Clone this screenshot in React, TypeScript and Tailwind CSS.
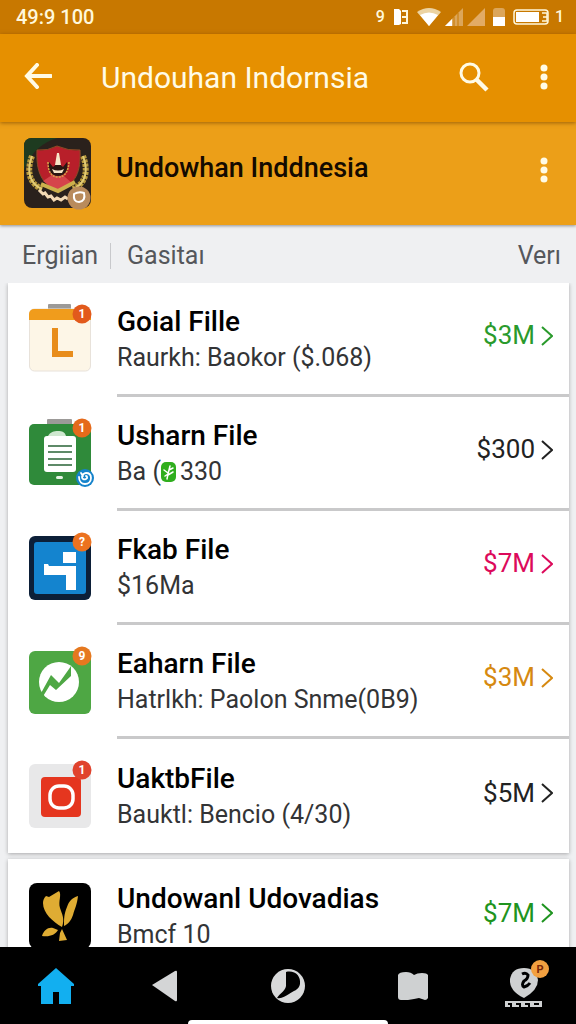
import React from 'react';

interface FileItem {
  title: string;
  detail: React.ReactNode;
  amount: string;
  color: string;
  icon: React.ReactNode;
}

const CountBadge = ({ label, fill }: { label: string; fill: string }) => (
  <>
    <circle cx="53" cy="6" r="9.5" fill={fill} />
    <text x="53" y="10" fontSize="12" fontWeight="700" textAnchor="middle" fill="#fff">{label}</text>
  </>
);

const NotesIcon = () => (
  <svg viewBox="0 0 62 64" className="h-16 w-16 overflow-visible">
    <rect x="19" y="-4" width="23" height="8" rx="1" fill="#9c9a98" />
    <rect x="0.5" y="1" width="61" height="62" rx="5" fill="#fdf6e7" stroke="#e8e2da" />
    <path d="M0 12V6a5 5 0 0 1 5-5h52a5 5 0 0 1 5 5v6z" fill="#f09c1c" />
    <path d="M23 20h6v23h15v6H23z" fill="#e88d1c" />
    <CountBadge label="1" fill="#e25a1c" />
  </svg>
);

const ClipboardIcon = () => (
  <svg viewBox="0 0 62 64" className="h-16 w-16 overflow-visible">
    <rect x="18" y="-3" width="25" height="8" rx="1" fill="#9c9a98" />
    <rect y="2" width="62" height="61" rx="5" fill="#2f8a3a" />
    <path d="M19 14c2-4 6-5 10-5s7 1 8 5z" fill="#cfe8d0" />
    <rect x="15" y="14" width="32" height="36" rx="3" fill="#fff" />
    <path d="M19 24h24M19 30h24M19 37h24M19 43h24" stroke="#5e8a68" strokeWidth="2" />
    <rect x="27" y="54" width="7" height="3" rx="1.5" fill="#e5f3e5" />
    <circle cx="56" cy="56" r="9" fill="#1583cb" />
    <path d="M52 51l2 3m-4 1c0 5 3 7 6 7s6-2 6-6-3-5-5-5-4 2-4 4 2 3 4 2 1-3 0-3" fill="none" stroke="#fff" strokeWidth="1.8" strokeLinecap="round" />
    <CountBadge label="1" fill="#e56a1b" />
  </svg>
);

const BlocksIcon = () => (
  <svg viewBox="0 0 62 64" className="h-16 w-16 overflow-visible">
    <rect width="62" height="64" rx="6" fill="#0c1f38" />
    <rect x="5" y="6" width="52" height="52" rx="3" fill="#1484cf" />
    <path d="M34 16h13v11H34zM15 28h4l1 2h27v24H37V39H15z" fill="#fff" />
    <CountBadge label="?" fill="#ec7220" />
  </svg>
);

const TrendIcon = () => (
  <svg viewBox="0 0 62 64" className="h-16 w-16 overflow-visible">
    <rect y="1" width="62" height="63" rx="6" fill="#4ea744" />
    <circle cx="30" cy="32" r="20" fill="#fff" />
    <path d="M11 45l11-20 8 8 10-14 2-3v10L27 40l-6-5-8 13z" fill="#4ea744" />
    <CountBadge label="9" fill="#e5781f" />
  </svg>
);

const RecordIcon = () => (
  <svg viewBox="0 0 62 64" className="h-16 w-16 overflow-visible">
    <rect width="62" height="64" rx="6" fill="#e8e8e9" />
    <rect x="12" y="13" width="40" height="40" rx="4" fill="#e5361f" />
    <rect x="21" y="22" width="23" height="22" rx="9" fill="none" stroke="#fff" strokeWidth="3.5" />
    <CountBadge label="1" fill="#e0432d" />
  </svg>
);

const WingsIcon = () => (
  <svg viewBox="0 0 62 66" className="h-[66px] w-16">
    <rect width="62" height="66" rx="8" fill="#000" />
    <g fill="#dfac33">
      <path d="M30 8c3 4-1 10 1 17 2 6 5 11 2 19C24 39 14 30 14 20c0-3 1-5 3-7l3 1z" />
      <path d="M49 13c-1 9-3 12-5 19-2 6-5 9-9 11 0-7 0-12 3-19 2-6 5-9 11-11z" />
      <path d="M13 53c2-6 6-9 11-8l5 2c-3 5-8 7-16 6zM33 46l5 11-8 1 1-8z" />
    </g>
  </svg>
);

const CrestIcon = () => (
  <svg viewBox="0 0 67 70" className="h-[70px] w-[67px] overflow-visible">
    <rect width="67" height="70" rx="8" fill="#2a211c" />
    <path d="M0 32V8q0-8 8-8h26Q10 6 0 32z" fill="#1e3b20" />
    <path d="M8 18C2 34 6 46 18 51M59 18c6 16 2 28-10 33" fill="none" stroke="#b99a3c" strokeWidth="6" strokeDasharray="3 1" />
    <path d="M8 18C2 34 6 46 18 51M59 18c6 16 2 28-10 33" fill="none" stroke="#e2cb74" strokeWidth="2" />
    <path d="M13 12q11 1 20-4 11 5 23 4c1 22-4 34-22 41C17 46 12 33 13 12z" fill="#b81f2a" stroke="#8d4a25" />
    <path d="M19 43l15-10 14 12-14 9z" fill="#d5444b" />
    <path d="M17 46l17 7 17-9" fill="none" stroke="#cdb04c" strokeWidth="4" />
    <path d="M25 24c-2 7 2 14 9 14s11-7 9-14l-4 5-5-4-5 4z" fill="#2a1712" />
    <path d="M33 15h2l2 12h-6zM28 31q6 3 12 0l-2 4h-8z" fill="#f7e6c8" />
    <path d="M24 24q0 15 10 15t11-15" fill="none" stroke="#d7a94a" strokeWidth="1.5" strokeDasharray="2 1" />
    <path d="M15 52l4 4 2-1 3 4 3-1 3 4 3-2 4 2 4-3 3 2" fill="none" stroke="#f3d9b4" strokeWidth="3" />
    <circle cx="55" cy="60" r="11.5" fill="#b98b5c" />
    <path d="M50 56q5-3 10-1 2 8-5 9-6 0-5-8z" fill="none" stroke="#fff" strokeWidth="2" strokeLinejoin="round" />
  </svg>
);

const LeafTag = () => (
  <svg viewBox="0 0 15 20" className="mr-1 inline-block h-5 w-[15px] align-[-2px]">
    <rect width="15" height="20" rx="5" fill="#2fae1e" />
    <path d="M6 17l1-5 2-8M7 11L3 8M7 13l5-3M4 14l3-2M8 8l4-2" stroke="#fff" strokeWidth="1.5" strokeLinecap="round" />
  </svg>
);

const MoreIcon = () => (
  <svg viewBox="0 0 8 26" className="h-[26px] w-2" fill="#fffbe6">
    <circle cx="4" cy="4" r="3.5" />
    <circle cx="4" cy="13" r="3.5" />
    <circle cx="4" cy="22" r="3.5" />
  </svg>
);

const files: FileItem[] = [
  { title: 'Goial Fille', detail: 'Raurkh: Baokor ($.068)', amount: '$3M', color: 'text-[#2a9a2c]', icon: <NotesIcon /> },
  { title: 'Usharn File', detail: <>Ba (<LeafTag />330</>, amount: '$300', color: 'text-[#222]', icon: <ClipboardIcon /> },
  { title: 'Fkab File', detail: '$16Ma', amount: '$7M', color: 'text-[#dc0a5b]', icon: <BlocksIcon /> },
  { title: 'Eaharn File', detail: 'Hatrlkh: Paolon Snme(0B9)', amount: '$3M', color: 'text-[#d68910]', icon: <TrendIcon /> },
  { title: 'UaktbFile', detail: 'Bauktl: Bencio (4/30)', amount: '$5M', color: 'text-[#222]', icon: <RecordIcon /> },
];

const moreFiles: FileItem[] = [
  { title: 'Undowanl Udovadias', detail: 'Bmcf 10', amount: '$7M', color: 'text-[#1f9420]', icon: <WingsIcon /> },
];

const FileCard = ({ items }: { items: FileItem[] }) => (
  <ul className="bg-white shadow-[0_1px_4px_rgba(0,0,0,0.3)]">
    {items.map((item, index) => (
      <li key={item.title} className="flex h-[114px] items-center pl-5">
        <div className="w-[89px] shrink-0">{item.icon}</div>
        <div
          className={`flex h-full min-w-0 flex-1 items-center justify-between ${
            index < items.length - 1 ? 'border-b-3 border-[#c9c9ca]' : ''
          }`}
        >
          <div className="whitespace-nowrap pt-0.5">
            <h2 className="text-[28px] font-medium leading-9 text-black">{item.title}</h2>
            <p className="text-[25px] leading-9 text-[#333436]">{item.detail}</p>
          </div>
          <a href="#" className={`flex items-center gap-1.5 pr-4 pb-1.5 text-[26px] ${item.color}`}>
            {item.amount}
            <svg viewBox="0 0 12 22" className="h-[22px] w-3" fill="none" stroke="currentColor" strokeWidth="2">
              <path d="M1 2l10 9-10 9" />
            </svg>
          </a>
        </div>
      </li>
    ))}
  </ul>
);

export default function App() {
  return (
    <div className="flex h-screen flex-col overflow-hidden bg-[#eff0f2] font-['Roboto',sans-serif]">
      {/* Status bar */}
      <div className="flex h-[34px] shrink-0 items-center justify-between bg-[#c87800] pl-4 pr-3 text-[20px] font-medium text-[#fff8dc]">
        <span>49:9 100</span>
        <div className="flex items-center gap-1">
          <span className="text-[16px]">9</span>
          <svg viewBox="0 0 16 18" className="mx-1 h-[18px] w-4">
            <path d="M1 1h5l2 2v13l-2 1H1z" fill="#fff" />
            <path d="M9 3h5v12H9M9 9h4" fill="none" stroke="#fff8dc" strokeWidth="2" />
          </svg>
          <svg viewBox="0 0 24 18" className="h-[18px] w-6">
            <path d="M0 4q12-8 24 0L12 18z" fill="#ecd3a2" />
            <path d="M3 7q9-5 18 0l-9 11z" fill="#fff" />
          </svg>
          <svg viewBox="0 0 18 18" className="h-[18px] w-[18px]">
            <path d="M0 18L18 0v18z" fill="#dca65a" />
            <path d="M0 18l7-7v7z" fill="#fff" />
            <path d="M9 9v9M13 5v13" stroke="#c87800" />
          </svg>
          <svg viewBox="0 0 18 18" className="h-[18px] w-[18px]">
            <path d="M0 18L18 0v18z" fill="#e2ab66" />
          </svg>
          <svg viewBox="0 0 12 20" className="mx-1 h-5 w-3">
            <path d="M0 4q0-3 3-3h6q3 0 3 3v6H0z" fill="#dca65a" />
            <path d="M0 10h12v9H0z" fill="#fff" />
          </svg>
          <svg viewBox="0 0 38 16" className="h-4 w-[38px]">
            <rect x="1" y="1" width="34" height="14" rx="3" fill="none" stroke="#fff8dc" strokeWidth="1.5" />
            <rect x="3" y="3" width="23" height="10" fill="#fff" />
            <path d="M29 4h5v8h-5M30 8h4" fill="none" stroke="#fff8dc" strokeWidth="1.5" />
          </svg>
          <span className="text-[16px]">1</span>
        </div>
      </div>

      {/* Toolbar */}
      <header className="relative flex h-[88px] shrink-0 items-center bg-[#e69000] pl-6 pr-7 text-[#fffbe6] shadow-[0_1px_4px_rgba(120,70,0,0.7)]">
        <button aria-label="Back" className="w-[77px] shrink-0 pb-1">
          <svg viewBox="0 0 28 26" className="h-[26px] w-7" fill="none" stroke="currentColor" strokeWidth="4">
            <path d="M27 13H3M13 2L3 13l10 11" strokeLinecap="round" />
          </svg>
        </button>
        <h1 className="flex-1 whitespace-nowrap pb-0.5 text-[30px]">Undouhan Indornsia</h1>
        <button aria-label="Search" className="mr-[51px] pb-0.5">
          <svg viewBox="0 0 30 30" className="h-[30px] w-[30px]" fill="none" stroke="currentColor">
            <circle cx="11" cy="11" r="9" strokeWidth="3" />
            <path d="M17 17l11 11" strokeWidth="4.5" />
          </svg>
        </button>
        <button aria-label="More options" className="pb-0.5"><MoreIcon /></button>
      </header>

      {/* Account */}
      <section className="flex h-[103px] shrink-0 items-center bg-[#ec9f18] pl-6 pr-7 shadow-[0_1px_3px_rgba(0,0,0,0.4)]">
        <div className="w-[92px] shrink-0 pb-0.5"><CrestIcon /></div>
        <h2 className="flex-1 whitespace-nowrap pb-2.5 text-[27px] font-medium text-[#140a00]">Undowhan Inddnesia</h2>
        <button aria-label="Account options" className="pb-2"><MoreIcon /></button>
      </section>

      {/* Filters */}
      <nav className="flex h-[58px] shrink-0 items-center pl-[22px] pt-1 pr-[15px] text-[25px] text-[#55575b]">
        <a href="#">Ergiian</a>
        <span className="ml-3 mr-4 h-[26px] w-px bg-[#c8c9cc]" />
        <a href="#" className="flex-1">Gasitaı</a>
        <a href="#">Verı</a>
      </nav>

      <main className="flex min-h-0 flex-1 flex-col gap-[6px] overflow-hidden pl-2 pr-[7px]">
        <FileCard items={files} />
        <FileCard items={moreFiles} />
      </main>

      {/* Bottom navigation */}
      <footer className="relative flex h-[77px] shrink-0 items-center justify-between bg-black pl-[38px] pr-[27px]">
        <button aria-label="Home">
          <svg viewBox="0 0 36 36" className="h-9 w-9">
            <path d="M18 0l18 16v2h-3v18H21V24h-6v12H3V18H0v-2z" fill="#12aff0" />
          </svg>
        </button>
        <button aria-label="Back" className="pr-4">
          <svg viewBox="0 0 26 32" className="h-8 w-[26px]">
            <path d="M1 15L24 1q2-1 2 1v28q0 2-2 1z" fill="#d4d5d6" />
          </svg>
        </button>
        <button aria-label="Recent">
          <svg viewBox="0 0 34 34" className="h-[34px] w-[34px]">
            <circle cx="17" cy="17" r="17" fill="#d8d9da" />
            <path d="M15 3c9-2 15 4 14 12-1 6-7 7-11 10-4 2-7 5-12 4 3-5 10-8 9-14z" fill="#000" />
          </svg>
        </button>
        <button aria-label="Library" className="pl-4">
          <svg viewBox="0 0 30 28" className="h-7 w-[30px]">
            <path d="M0 3q1-3 8-3 5 0 8 3 3-2 8-2 5 0 6 2v23q-1 2-3 2l-6-2-5 1-6 1H3q-3 0-3-3z" fill="#cfd1d2" />
          </svg>
        </button>
        <button aria-label="Profile" className="pb-1">
          <svg viewBox="0 0 44 48" className="h-12 w-11">
            <path d="M5 19Q7 8 19 8t14 12q0 10-14 18Q4 31 5 19z" fill="#cfd1d2" />
            <path d="M17 14q4-2 6 1 0 4-4 6-3 4 0 6 4-1 6-4" fill="none" stroke="#000" strokeWidth="3" />
            <path d="M0 41h37v6H0z" fill="#cfd1d2" />
            <path d="M3 44h3v3M11 44h4v3M20 44h4v3M29 44h5" fill="none" stroke="#000" strokeWidth="2" />
            <circle cx="35" cy="9" r="9" fill="#f2a040" />
            <text x="35" y="13" fontSize="11" fontWeight="700" textAnchor="middle" fill="#7a2608">P</text>
          </svg>
        </button>
        <span className="absolute inset-x-[188px] bottom-0 h-1 rounded-t bg-white" />
      </footer>
    </div>
  );
}
